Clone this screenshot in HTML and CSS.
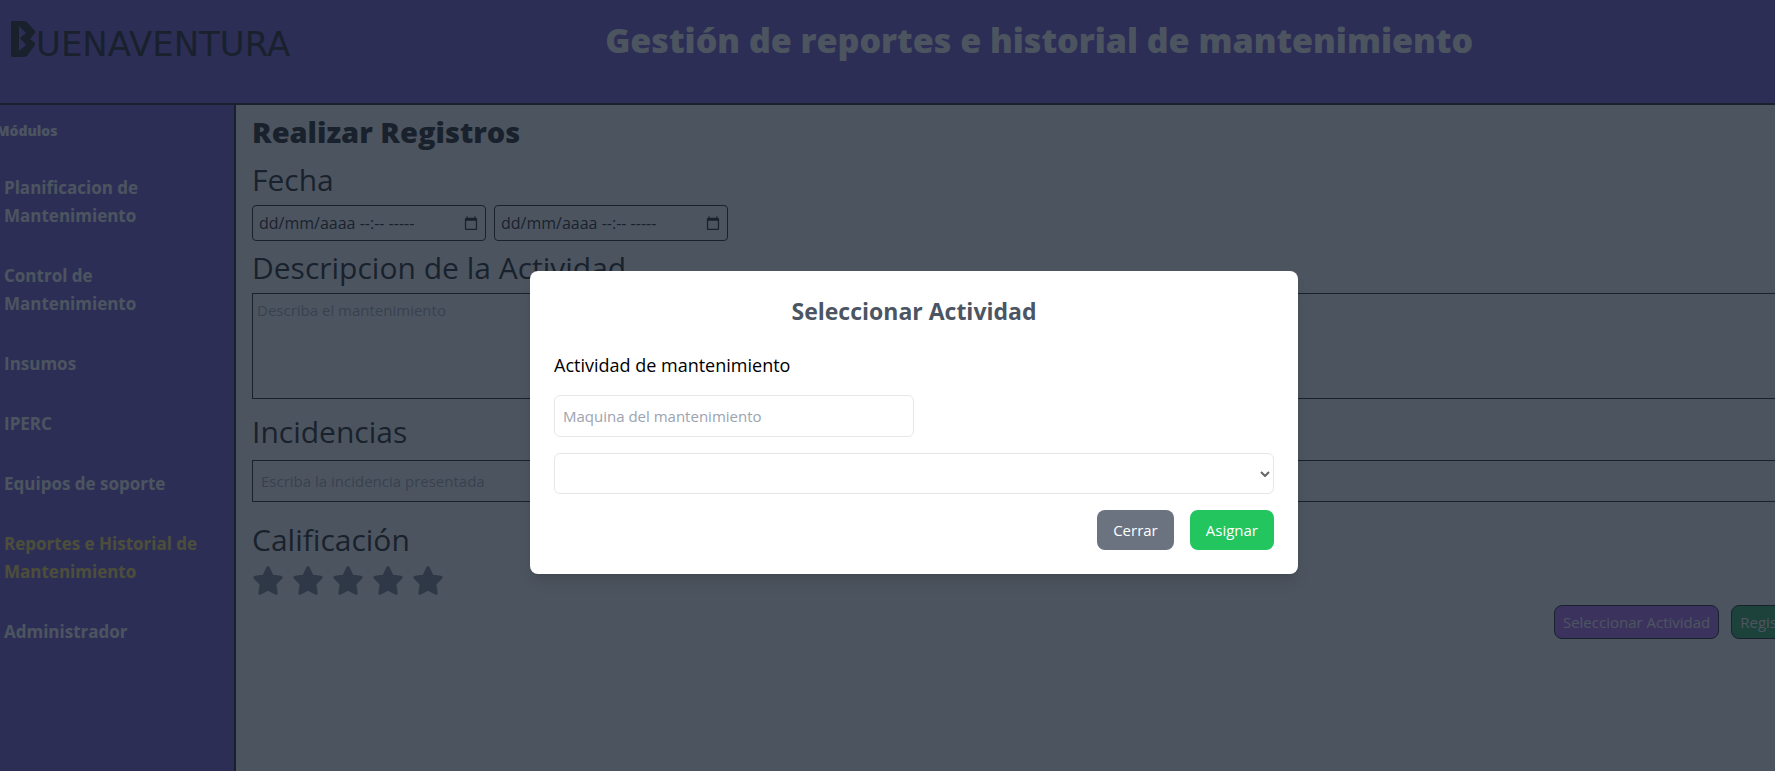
FILE: index.html
```html
<!DOCTYPE html>
<html lang="es">
<head>
<meta charset="utf-8">
<title>Gestión de reportes e historial de mantenimiento</title>
<link rel="stylesheet" href="styles.css">
</head>
<body>
<svg class="defs" aria-hidden="true">
  <symbol id="star" viewBox="0 0 576 512"><path d="M316.900 18C311.600 7 300.400 0 288.100 0s-23.400 7-28.800 18L195 150.300 51.400 171.500c-12 1.800-22 10.200-25.700 21.700s-.7 24.200 7.900 32.700L137.800 329 113.200 474.700c-2 12 3 24.200 12.900 31.300s23 8 33.800 2.300l128.300-68.500 128.300 68.500c10.800 5.700 23.900 4.900 33.800-2.300s14.900-19.300 12.900-31.300L438.500 329 542.700 225.900c8.600-8.500 11.700-21.200 7.900-32.700s-13.700-19.900-25.700-21.700L381.200 150.300 316.900 18z"/></symbol>
  <symbol id="calendar" viewBox="0 0 16 16"><path fill-rule="evenodd" d="M3 0h1v2h8V0h1v2h1l1 1v12l-1 1H2l-1-1V3l1-1h1zM2.500 5.500v9h11v-9z"/></symbol>
</svg>
<div class="app">
  <header class="topbar">
    <div class="logo">
      <svg class="logo-mark" viewBox="0 0 26 40" aria-hidden="true"><path d="M2 3h12l3 1 8 9v2l-5 6 5 4v2l-8 11-3 1H2l-1-1V4z"/><path class="logo-cut" d="M9 8l7 7-6 5 6 7-7 6z"/></svg>
      <span class="logo-text">UENAVENTURA</span>
    </div>
    <h1 class="title">Gestión de reportes e historial de mantenimiento</h1>
  </header>
  <div class="body">
    <nav class="sidebar">
      <h2 class="side-head">Módulos</h2>
      <ul class="side-list">
        <li><a href="#">Planificacion de Mantenimiento</a></li>
        <li><a href="#">Control de Mantenimiento</a></li>
        <li><a href="#">Insumos</a></li>
        <li><a href="#">IPERC</a></li>
        <li><a href="#">Equipos de soporte</a></li>
        <li><a class="active" href="#">Reportes e Historial de Mantenimiento</a></li>
        <li><a href="#">Administrador</a></li>
      </ul>
    </nav>
    <main class="main">
      <h2 class="heading">Realizar Registros</h2>
      <label class="label" for="start">Fecha</label>
      <div class="dates">
        <div class="date"><input id="start" type="text" value="dd/mm/aaaa --:-- -----"><svg><use href="#calendar"/></svg></div>
        <div class="date"><input aria-label="Fecha final" type="text" value="dd/mm/aaaa --:-- -----"><svg><use href="#calendar"/></svg></div>
      </div>
      <label class="label" for="desc">Descripcion de la Actividad</label>
      <textarea class="desc" id="desc" placeholder="Describa el mantenimiento"></textarea>
      <label class="label" for="inc">Incidencias</label>
      <input class="incident" id="inc" type="text" placeholder="Escriba la incidencia presentada">
      <h3 class="label">Calificación</h3>
      <div class="stars">
        <button aria-label="1 estrella"><svg><use href="#star"/></svg></button>
        <button aria-label="2 estrellas"><svg><use href="#star"/></svg></button>
        <button aria-label="3 estrellas"><svg><use href="#star"/></svg></button>
        <button aria-label="4 estrellas"><svg><use href="#star"/></svg></button>
        <button aria-label="5 estrellas"><svg><use href="#star"/></svg></button>
      </div>
      <div class="actions">
        <button class="action pick">Seleccionar Actividad</button>
        <button class="action save">Registrar</button>
      </div>
    </main>
  </div>
  <div class="overlay">
    <section class="modal" role="dialog" aria-labelledby="modal-title">
      <h2 class="modal-title" id="modal-title">Seleccionar Actividad</h2>
      <label class="modal-label" for="machine">Actividad de mantenimiento</label>
      <input class="field machine" id="machine" type="text" placeholder="Maquina del mantenimiento">
      <div class="select-wrap">
        <select class="field select" aria-label="Actividad"><option></option></select>
        <svg viewBox="0 0 10 6"><path d="M1 1l4 4 4-4"/></svg>
      </div>
      <div class="modal-actions">
        <button class="btn close">Cerrar</button>
        <button class="btn assign">Asignar</button>
      </div>
    </section>
  </div>
</div>
</body>
</html>
```
FILE: styles.css
```css
*, *::before, *::after { box-sizing: border-box; }
html, body { height: 100%; }
body {
  margin: 0;
  overflow: hidden;
  font: 15px/24px "Open Sans", "Noto Sans", sans-serif;
  color: #000;
  background: #fff;
}
h1, h2, h3, ul { margin: 0; padding: 0; }
button, input, textarea, select { font: inherit; color: inherit; margin: 0; }
.defs { display: none; }

/* The shell is larger than the window on the left, right and bottom. */
.app {
  position: relative;
  display: flex;
  flex-direction: column;
  width: calc(100% + 65px);
  height: calc(100% + 74px);
  margin-left: -12px;
}
.topbar {
  display: flex;
  align-items: flex-start;
  height: 105px;
  padding: 18px 16px 0 22px;
  background: #5f41d2;
  border-bottom: 2px solid #000;
}
.logo { display: flex; align-items: flex-start; }
.logo-mark { width: 26px; height: 40px; }
.logo-cut { fill: #5f41d2; }
.logo-text { font: 34px/36px "DejaVu Sans", sans-serif; padding-top: 8px; }
.title {
  flex: 1;
  text-align: center;
  font-size: 34px;
  line-height: 40px;
  font-weight: 800;
  color: #fff;
  padding: 2px 24px 0 0;
}
.body { flex: 1; display: flex; }
.sidebar {
  width: 248px;
  padding-top: 16px;
  background: #5f41d2;
  border-right: 2px solid #000;
}
.side-head {
  font-size: 14px;
  line-height: 20px;
  font-weight: 800;
  color: #fff;
  padding-left: 8px;
}
.side-list {
  list-style: none;
  display: flex;
  flex-direction: column;
  gap: 32px;
  padding: 33px 16px 0 16px;
}
.side-list li { font-size: 17px; line-height: 28px; font-weight: 700; }
.side-list li:nth-child(-n+2) { padding-right: 32px; }
.side-list a { color: #fff; text-decoration: none; }
.side-list .active { color: #fde047; }

.main {
  flex: 1;
  display: flex;
  flex-direction: column;
  padding: 9px 16px;
}
.heading { font-size: 29px; line-height: 36px; font-weight: 800; margin-bottom: 12px; }
.label { font-size: 30px; line-height: 36px; font-weight: 500; }
.dates { display: flex; gap: 8px; margin: 7px 0 9px; }
.date {
  display: flex;
  align-items: center;
  width: 234px;
  height: 36px;
  padding: 0 7px 0 6px;
  border: 1px solid #000;
  border-radius: 4px;
}
.date input { flex: 1; min-width: 0; padding: 0; border: 0; background: none; outline: 0; font-size: 16px; font-variant-ligatures: none; }
.date svg { width: 14px; height: 14px; }
.desc {
  height: 106px;
  margin: 7px 0 15px;
  padding: 4px;
  border: 1px solid #000;
  background: none;
  resize: none;
}
.incident {
  height: 42px;
  margin: 10px 0 20px;
  padding: 8px;
  border: 1px solid #000;
  background: none;
}
::placeholder { color: #9ca3af; opacity: 1; }
.stars { display: flex; gap: 8px; margin-top: 8px; }
.stars button { display: flex; padding: 0; border: 0; background: none; }
.stars svg { width: 32px; height: 29px; fill: #6b7280; }
.actions { display: flex; justify-content: flex-end; gap: 12px; margin-top: 10px; }
.action {
  padding: 4px 8px;
  border: 1px solid #000;
  border-radius: 8px;
  color: #fff;
}
.pick { background: #a855f7; }
.save { background: #16a34a; }

.overlay {
  position: absolute;
  inset: 0 0 0 12px;
  display: flex;
  align-items: center;
  justify-content: center;
  background: rgba(31, 41, 55, .8);
}
.modal {
  display: flex;
  flex-direction: column;
  width: 768px;
  padding: 24px;
  border-radius: 8px;
  background: #fff;
  box-shadow: 0 10px 15px -3px rgba(0, 0, 0, .1), 0 4px 6px -4px rgba(0, 0, 0, .1);
}
.modal-title {
  font-size: 23px;
  line-height: 32px;
  font-weight: 700;
  text-align: center;
  color: #4b5563;
  margin-bottom: 24px;
}
.modal-label { font-size: 18px; line-height: 28px; font-weight: 500; }
.field {
  height: 42px;
  padding: 8px;
  border: 1px solid #e5e7eb;
  border-radius: 6px;
  background: #fff;
}
.machine { width: 50%; margin: 16px 0; }
.select-wrap { display: grid; align-items: center; }
.select-wrap > * { grid-area: 1 / 1; }
.select { width: 100%; height: 41px; appearance: none; }
.select-wrap svg {
  justify-self: end;
  width: 10px;
  height: 6px;
  margin-right: 4px;
  fill: none;
  stroke: #666;
  stroke-width: 2;
  pointer-events: none;
}
.modal-actions { display: flex; justify-content: flex-end; gap: 16px; margin-top: 16px; }
.btn { padding: 8px 16px; border: 0; border-radius: 8px; color: #fff; }
.close { background: #6b7280; }
.assign { background: #22c55e; }
```
